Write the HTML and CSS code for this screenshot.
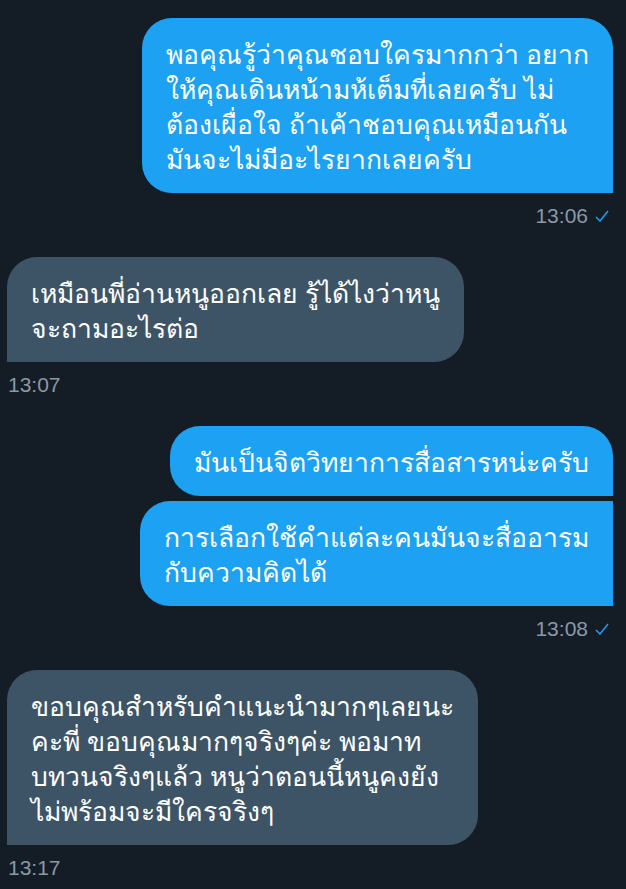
FILE: index.html
```html
<!DOCTYPE html>
<html>
<head>
  <meta charset="UTF-8">
  <title>Messages</title>
  <link rel="stylesheet" href="styles.css">
</head>
<body>
<div class="chat">
  <div class="group sent">
    <div class="bubble solo">พอคุณรู้ว่าคุณชอบใครมากกว่า อยาก<br>ให้คุณเดินหน้ามห้เต็มที่เลยครับ ไม่<br>ต้องเผื่อใจ ถ้าเค้าชอบคุณเหมือนกัน<br>มันจะไม่มีอะไรยากเลยครับ</div>
    <div class="meta">13:06 <svg class="tick" width="14" height="12" viewBox="0 0 14 12"><polyline points="1,7 5,11 13,1"/></svg></div>
  </div>

  <div class="group recv">
    <div class="bubble solo">เหมือนพี่อ่านหนูออกเลย รู้ได้ไงว่าหนู<br>จะถามอะไรต่อ</div>
    <div class="meta">13:07</div>
  </div>

  <div class="group sent">
    <div class="bubble first">มันเป็นจิตวิทยาการสื่อสารหน่ะครับ</div>
    <div class="bubble last">การเลือกใช้คำแต่ละคนมันจะสื่ออารม<br>กับความคิดได้</div>
    <div class="meta">13:08 <svg class="tick" width="14" height="12" viewBox="0 0 14 12"><polyline points="1,7 5,11 13,1"/></svg></div>
  </div>

  <div class="group recv">
    <div class="bubble solo">ขอบคุณสำหรับคำแนะนำมากๆเลยนะ<br>คะพี่ ขอบคุณมากๆจริงๆค่ะ พอมาท<br>บทวนจริงๆแล้ว หนูว่าตอนนี้หนูคงยัง<br>ไม่พร้อมจะมีใครจริงๆ</div>
    <div class="meta">13:17</div>
  </div>
</div>
</body>
</html>
```

FILE: styles.css
```css
body {
  margin: 0;
  background: #141d26;
  font-family: "Noto Sans", "DejaVu Sans", sans-serif;
}
.chat {
  display: flex;
  flex-direction: column;
  gap: 31px;
  padding: 18px 13px 10px 7px;
}
.group {
  display: flex;
  flex-direction: column;
  gap: 5px;
}
.sent {
  align-items: flex-end;
}
.recv {
  align-items: flex-start;
}
.bubble {
  color: #ffffff;
  font-size: 26.5px;
  line-height: 35px;
  padding: 19px 24px 16px 24px;
  border-radius: 30px;
  white-space: nowrap;
}
.sent .bubble {
  background: #1da1f2;
}
.recv .bubble {
  background: #3d5466;
}
.sent .solo {
  border-bottom-right-radius: 0;
}
.recv .solo {
  border-bottom-left-radius: 0;
}
.sent .first {
  border-bottom-right-radius: 0;
}
.sent .last {
  border-top-right-radius: 0;
  border-bottom-right-radius: 0;
}
.meta {
  color: #8b98a5;
  font-family: "Liberation Sans", Arial, sans-serif;
  font-size: 21px;
  line-height: 20px;
  margin-top: 8px;
  padding: 0 4px 0 1px;
  display: flex;
  align-items: center;
  gap: 7px;
}
.tick {
  fill: none;
  stroke: #1da1f2;
  stroke-width: 1.5;
}
```
